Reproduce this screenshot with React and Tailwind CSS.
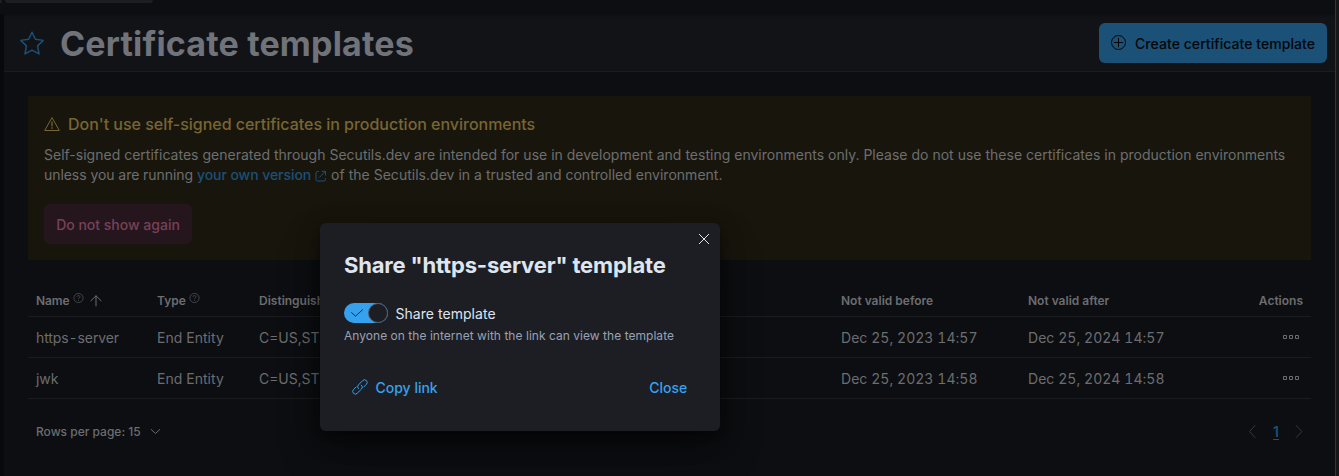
import React from 'react';

const StarIcon = () => (
  <svg width="24" height="24" viewBox="0 0 16 16" fill="none" stroke="currentColor" strokeWidth="1" strokeLinejoin="round">
    <path d="M8 .8 10.25 5.5 15.5 6.25 11.7 9.9 12.7 15.3 8 12.7 3.3 15.3 4.3 9.9 .5 6.25 5.75 5.5Z" />
  </svg>
);

const PlusCircleIcon = () => (
  <svg width="16" height="16" viewBox="0 0 16 16" fill="none" stroke="currentColor">
    <circle cx="7.5" cy="7.5" r="7" />
    <path d="M7.5 3.2v8.6M3.2 7.5h8.6" strokeLinecap="round" />
  </svg>
);

const WarningIcon = () => (
  <svg width="16" height="16" viewBox="0 0 16 16" fill="none" stroke="currentColor">
    <path d="M8 1.6 15.3 14.5H.7Z" strokeLinejoin="round" />
    <path d="M8 5.5v4.8" strokeWidth="1.3" />
    <path d="M7.3 11.3h1.4v1.4H7.3z" fill="currentColor" stroke="none" />
  </svg>
);

const ExternalIcon = () => (
  <svg className="ml-1 inline-block align-[-2px]" width="12" height="12" viewBox="0 0 12 12" fill="none" stroke="currentColor">
    <path d="M4 1.5H2.5a1.5 1.5 0 0 0-1.5 1.5v6.5A1.5 1.5 0 0 0 2.5 11H9a1.5 1.5 0 0 0 1.5-1.5V8" />
    <path d="M7 1.3h3.5V5M10.3 1.5 4.5 7.3" strokeLinecap="round" />
  </svg>
);

const QuestionIcon = () => (
  <svg className="mt-[-6px] ml-[3.5px]" width="11" height="11" viewBox="0 0 11 11" fill="none" stroke="currentColor" strokeWidth=".8" opacity=".7">
    <circle cx="5.5" cy="5" r="4.6" />
    <path d="M4 3.9c0-.9.7-1.4 1.5-1.4S7 3 7 3.8c0 1-1.5 1-1.5 2.1M5.5 6.8v1" />
  </svg>
);

const SortUpIcon = () => (
  <svg className="mt-[-1px] ml-[6px]" width="12" height="12" viewBox="0 0 12 12" fill="none" stroke="currentColor" strokeLinecap="round">
    <path d="M6 .9v10M.9 5.8 6 .8l5.1 5" />
  </svg>
);

const BoxesIcon = () => (
  <svg width="16" height="6" viewBox="0 0 16 6" fill="none" stroke="currentColor">
    <path d="M.5 1.5h3v3h-3zM6.5 1.5h3v3h-3zM12.5 1.5h3v3h-3z" />
  </svg>
);

const LinkIcon = () => (
  <svg width="16" height="16" viewBox="0 0 16 16" fill="none" stroke="currentColor" strokeLinecap="round">
    <path d="M6.4 9.6a2.6 2.6 0 0 1 0-3.7l4.3-4.3a2.6 2.6 0 0 1 3.7 3.7l-2.7 2.7" />
    <path d="M9.3 6.1a2.6 2.6 0 0 1 .2 3.9l-4.3 4.3a2.6 2.6 0 0 1-3.7-3.7l2.7-2.7" />
  </svg>
);

const Chevron = ({ d, w, h }) => (
  <svg width={w} height={h} viewBox={`0 0 ${w} ${h}`} fill="none" stroke="currentColor" strokeLinecap="round" strokeLinejoin="round">
    <path d={d} />
  </svg>
);

const columns = 'grid grid-cols-[121px_102px_582px_187px_1fr_90px] px-2';

const rows = [
  { name: 'https-server', before: 'Dec 25, 2023 14:57', after: 'Dec 25, 2024 14:57' },
  { name: 'jwk', before: 'Dec 25, 2023 14:58', after: 'Dec 25, 2024 14:58' },
];

function PageHeader() {
  return (
    <header className="flex h-[58px] shrink-0 items-center justify-between border-b border-[#1a1c20] bg-[#121317] pr-2 pl-4 shadow-[inset_0_3px_3px_-2px_rgba(0,0,0,0.35)]">
      <div className="flex items-center">
        <span className="text-[#1b5078]"><StarIcon /></span>
        <h1 className="ml-4 pt-[2px] text-[34px] leading-10 font-bold tracking-[0.17px] text-[#707379]">Certificate templates</h1>
      </div>
      <button className="flex h-10 w-[228px] items-center rounded-md bg-[#1b5077] pl-3 text-sm font-medium text-[#030609]">
        <PlusCircleIcon />
        <span className="ml-2 pt-[2px] tracking-[0.06px]">Create certificate template</span>
      </button>
    </header>
  );
}

function Callout() {
  return (
    <section className="h-[164px] bg-[#18160c] p-4">
      <h2 className="flex h-6 items-center text-base font-medium text-[#786532]">
        <WarningIcon />
        <span className="ml-2 tracking-[-0.02px]">Don't use self-signed certificates in production environments</span>
      </h2>
      <p className="mt-[9px] text-sm leading-5 whitespace-nowrap text-[#6d6e70]">
        <span className="tracking-[0.01px]">Self-signed certificates generated through Secutils.dev are intended for use in development and testing environments only. Please do not use these certificates in production environments</span>
        <br />
        <span className="tracking-[-0.06px]">unless you are running{' '}</span>
        <a className="font-medium tracking-[-0.06px] text-[#1b5078]">your own version<ExternalIcon /></a>{' '}
        <span className="tracking-[0.02px]">of the Secutils.dev in a trusted and controlled environment.</span>
      </p>
      <button className="mt-[19px] h-10 w-[148px] rounded-md bg-[#25161e] pt-[2px] text-sm font-medium text-[#794156]">Do not show again</button>
    </section>
  );
}

function Table() {
  return (
    <div className="mt-6 text-[#6b6d70]">
      <div className={`${columns} h-[33px] items-center border-b border-[#1a1c20] pt-[2px] text-xs font-semibold`}>
        <div className="flex items-center tracking-[-0.1px]">Name<QuestionIcon /><SortUpIcon /></div>
        <div className="flex items-center">Type<QuestionIcon /></div>
        <div>Distinguished name</div>
        <div>Not valid before</div>
        <div>Not valid after</div>
        <div className="text-right">Actions</div>
      </div>
      {rows.map((row) => (
        <div key={row.name} className={`${columns} h-[41px] items-center border-b border-[#1a1c20] pt-[2px] text-sm tabular-nums`}>
          <div className="tracking-[-0.1px]">{row.name}</div>
          <div className="tracking-[0.04px]">End Entity</div>
          <div>C=US,ST=CA</div>
          <div className="tracking-[0.04px]">{row.before}</div>
          <div className="tracking-[0.04px]">{row.after}</div>
          <div className="flex justify-end pr-1 pb-[2px]"><BoxesIcon /></div>
        </div>
      ))}
      <div className="mt-[21px] flex h-6 items-center justify-between px-2">
        <div className="flex items-center gap-[9px] text-xs font-medium">
          Rows per page: 15
          <Chevron w={11} h={6} d="M1 .3 5.5 4.5 10 .3" />
        </div>
        <div className="flex items-center text-[#38393d]">
          <Chevron w={8} h={14} d="M6 .5 .6 6.5l5.4 6" />
          <span className="mr-4 ml-4 text-sm font-semibold text-[#1b5078] underline underline-offset-2">1</span>
          <Chevron w={8} h={14} d="M1.2 .5 6.8 6.5l-5.6 6" />
        </div>
      </div>
    </div>
  );
}

function ShareModal() {
  return (
    <div role="dialog" className="absolute top-[223px] left-[320px] h-[208px] w-[400px] rounded-md bg-[#1d1e24] px-6 pt-[28px] shadow-[0_3px_9px_rgba(0,0,0,0.33),0_9px_24px_rgba(0,0,0,0.3),0_22px_43px_rgba(0,0,0,0.3)]">
      <button aria-label="Close dialog" className="absolute top-[10px] right-[10px] text-[#dfe5ef]">
        <Chevron w={12} h={12} d="M1.3 1.3l9.4 9.4M10.7 1.3l-9.4 9.4" />
      </button>
      <h2 className="text-[22px] leading-7 font-bold tracking-[-0.18px] text-[#dfe5ef]">Share "https-server" template</h2>
      <div className="mt-6 flex h-5 items-center">
        <div className="flex h-5 w-11 items-center justify-between rounded-full bg-[#36a2ef] pl-[7px]">
          <svg width="12" height="8" viewBox="0 0 12 8" fill="none" stroke="#1d1e24" strokeLinecap="round"><path d="M.7 3.7 4.5 7.2 11.5.8" /></svg>
          <span className="h-5 w-5 rounded-full border border-[#535966] bg-[#1d1e24]" />
        </div>
        <span className="ml-[7.5px] pt-[2px] text-sm tracking-[0.04px] text-[#dfe5ef]">Share template</span>
      </div>
      <p className="mt-[5px] text-xs leading-4 tracking-[0.035px] text-[#98a2b3]">Anyone on the internet with the link can view the template</p>
      <div className="mt-6 flex h-10 items-center justify-between px-2 text-sm font-medium text-[#36a2ef]">
        <button className="flex items-center gap-2"><span className="-mt-[2px] -ml-[.5px]"><LinkIcon /></span>Copy link</button>
        <button className="pr-[.7px]">Close</button>
      </div>
    </div>
  );
}

export default function App() {
  return (
    <div className="relative flex h-[476px] w-[1339px] flex-col overflow-hidden bg-[#0d0e11] font-['Inter',sans-serif] whitespace-nowrap">
      <div className="flex h-[14px] shrink-0 gap-[3px] bg-[#0d0e11]">
        <div className="h-[3px] w-[2px] bg-[#1d1e21]" />
        <div className="h-[3px] w-[148px] rounded-b-sm bg-[#1d1e21]" />
      </div>
      <div className="flex min-h-0 flex-1">
        <div className="w-1 bg-[#08090b]" />
        <main className="flex w-[1331px] flex-col">
          <PageHeader />
          <div className="px-6 pt-6">
            <Callout />
            <Table />
          </div>
        </main>
      </div>
      <div className="absolute top-0 right-0 h-full w-1 border-l border-[#35363a] bg-[#171717]" />
      <ShareModal />
    </div>
  );
}
